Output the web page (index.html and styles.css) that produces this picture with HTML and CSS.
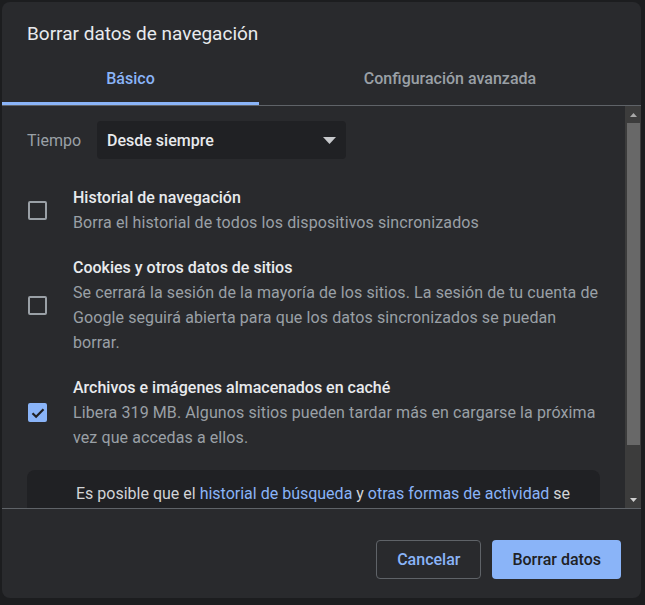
FILE: index.html
```html
<!DOCTYPE html>
<html lang="es">
<head>
<meta charset="utf-8">
<title>Borrar datos de navegación</title>
<link rel="stylesheet" href="styles.css">
</head>
<body>
<div class="dialog">
  <h1 class="title">Borrar datos de navegación</h1>
  <div class="tabs">
    <div class="tab tab-basic active">Básico</div>
    <div class="tab tab-adv">Configuración avanzada</div>
  </div>
  <div class="body">
    <div class="content">
      <div class="time-row">
        <span class="time-label">Tiempo</span>
        <div class="select">
          <span>Desde siempre</span>
          <svg class="caret" width="13" height="7" viewBox="0 0 13 7"><path d="M0 0h13L6.5 7z" fill="#c7c9cc"/></svg>
        </div>
      </div>
      <div class="item">
        <span class="checkbox"></span>
        <div class="item-text">
          <div class="item-title">Historial de navegación</div>
          <div class="item-desc">Borra el historial de todos los dispositivos sincronizados</div>
        </div>
      </div>
      <div class="item">
        <span class="checkbox"></span>
        <div class="item-text">
          <div class="item-title">Cookies y otros datos de sitios</div>
          <div class="item-desc">Se cerrará la sesión de la mayoría de los sitios. La sesión de tu cuenta de Google seguirá abierta para que los datos sincronizados se puedan borrar.</div>
        </div>
      </div>
      <div class="item">
        <span class="checkbox checked">
          <svg width="14" height="12" viewBox="0 0 14 12"><path d="M1.5 6.2l3.6 3.6L12.5 2.2" fill="none" stroke="#202124" stroke-width="2.2"/></svg>
        </span>
        <div class="item-text">
          <div class="item-title">Archivos e imágenes almacenados en caché</div>
          <div class="item-desc">Libera 319 MB. Algunos sitios pueden tardar más en cargarse la próxima vez que accedas a ellos.</div>
        </div>
      </div>
      <div class="notice">
        <svg class="notice-icon" width="20" height="20" viewBox="0 0 20 20"><circle cx="10" cy="10" r="8" fill="none" stroke="#9aa0a6" stroke-width="2"/></svg>
        <p class="notice-text">Es posible que el <a href="#">historial de búsqueda</a> y <a href="#">otras formas de actividad</a> se guarden en tu cuenta de Google cuando inicies sesión. Puedes eliminarlas cuando quieras.</p>
      </div>
    </div>
    <div class="scrollbar">
      <div class="sb-arrow"><svg width="7" height="4" viewBox="0 0 7 4"><path d="M0 4h7L3.5 0z" fill="#a8a8a8"/></svg></div>
      <div class="sb-track"><div class="sb-thumb"></div></div>
      <div class="sb-arrow"><svg width="7" height="4" viewBox="0 0 7 4"><path d="M0 0h7L3.5 4z" fill="#d0d0d0"/></svg></div>
    </div>
  </div>
  <div class="footer">
    <button class="btn btn-cancel">Cancelar</button>
    <button class="btn btn-primary">Borrar datos</button>
  </div>
</div>
</body>
</html>
```

FILE: styles.css
```css
* { box-sizing: border-box; }
html, body { margin: 0; padding: 0; }
body {
  background: #1c1d1f;
  font-family: Roboto, "Liberation Sans", Arial, sans-serif;
  width: 645px;
  height: 605px;
  overflow: hidden;
}
.dialog {
  margin: 2px 4px 0 2px;
  width: 639px;
  height: 596px;
  background: #292a2d;
  border-radius: 8px;
  display: flex;
  flex-direction: column;
  overflow: hidden;
}
.title {
  margin: 0;
  padding: 20px 0 0 25px;
  font-size: 19px;
  line-height: 24px;
  font-weight: 400;
  color: #e8eaed;
}
.tabs {
  margin-top: 11px;
  display: flex;
  border-bottom: 1px solid #5f6368;
}
.tab {
  height: 48px;
  padding-bottom: 3px;
  border-bottom: 3px solid transparent;
  display: flex;
  align-items: center;
  justify-content: center;
  font-size: 16px;
  font-weight: 500;
  color: #9aa0a6;
}
.tab-basic { flex: 0 0 257px; }
.tab-adv { flex: 1; }
.tab.active {
  color: #8ab4f8;
  border-bottom-color: #8ab4f8;
}
.body {
  height: 403px;
  display: flex;
  border-bottom: 1px solid #5f6368;
}
.content {
  flex: 1;
  overflow: hidden;
  padding: 15px 25px 0 25px;
}
.time-row {
  display: flex;
  align-items: center;
  margin-bottom: 26px;
}
.time-label {
  width: 70px;
  font-size: 16px;
  color: #9aa0a6;
}
.select {
  width: 249px;
  height: 38px;
  background: #202124;
  border-radius: 4px;
  display: flex;
  align-items: center;
  justify-content: space-between;
  padding: 0 10px 0 10px;
  font-size: 16px;
  font-weight: 500;
  color: #e8eaed;
}
.item {
  display: flex;
  align-items: center;
  margin-bottom: 20px;
}
.checkbox {
  flex: 0 0 19px;
  width: 19px;
  height: 19px;
  border: 2px solid #9aa0a6;
  border-radius: 2px;
  margin-left: 1px;
  margin-right: 26px;
  display: flex;
  align-items: center;
  justify-content: center;
}
.checkbox.checked {
  background: #8ab4f8;
  border-color: #8ab4f8;
}
.item-text { flex: 1; }
.item-title {
  font-size: 16px;
  line-height: 25px;
  font-weight: 500;
  color: #e8eaed;
}
.item-desc {
  font-size: 16px;
  line-height: 25px;
  letter-spacing: 0.1px;
  color: #9aa0a6;
}
.notice {
  background: #202124;
  border-radius: 8px;
  display: flex;
  align-items: center;
  padding: 11px 20px 11px 12px;
}
.notice-icon {
  flex: 0 0 20px;
  margin-right: 17px;
}
.notice-text {
  margin: 0;
  font-size: 16px;
  line-height: 25px;
  color: #d2d4d7;
}
.notice-text a {
  color: #8ab4f8;
  text-decoration: none;
}
.scrollbar {
  flex: 0 0 16px;
  width: 16px;
  background: #3c3c3c;
  display: flex;
  flex-direction: column;
}
.sb-arrow {
  height: 17px;
  display: flex;
  align-items: center;
  justify-content: center;
}
.sb-track {
  flex: 1;
  padding: 0 1px 0 2px;
}
.sb-thumb {
  height: 322px;
  background: #686868;
}
.footer {
  flex: 1;
  display: flex;
  justify-content: flex-end;
  align-items: flex-start;
  gap: 11px;
  padding: 31px 20px 0 0;
}
.btn {
  height: 39px;
  padding: 0 20px;
  border-radius: 4px;
  font-family: Roboto, "Liberation Sans", Arial, sans-serif;
  font-size: 16px;
  font-weight: 500;
  cursor: pointer;
}
.btn-cancel {
  background: transparent;
  border: 1px solid #5f6368;
  color: #8ab4f8;
}
.btn-primary {
  background: #8ab4f8;
  border: none;
  color: #202124;
}
```
